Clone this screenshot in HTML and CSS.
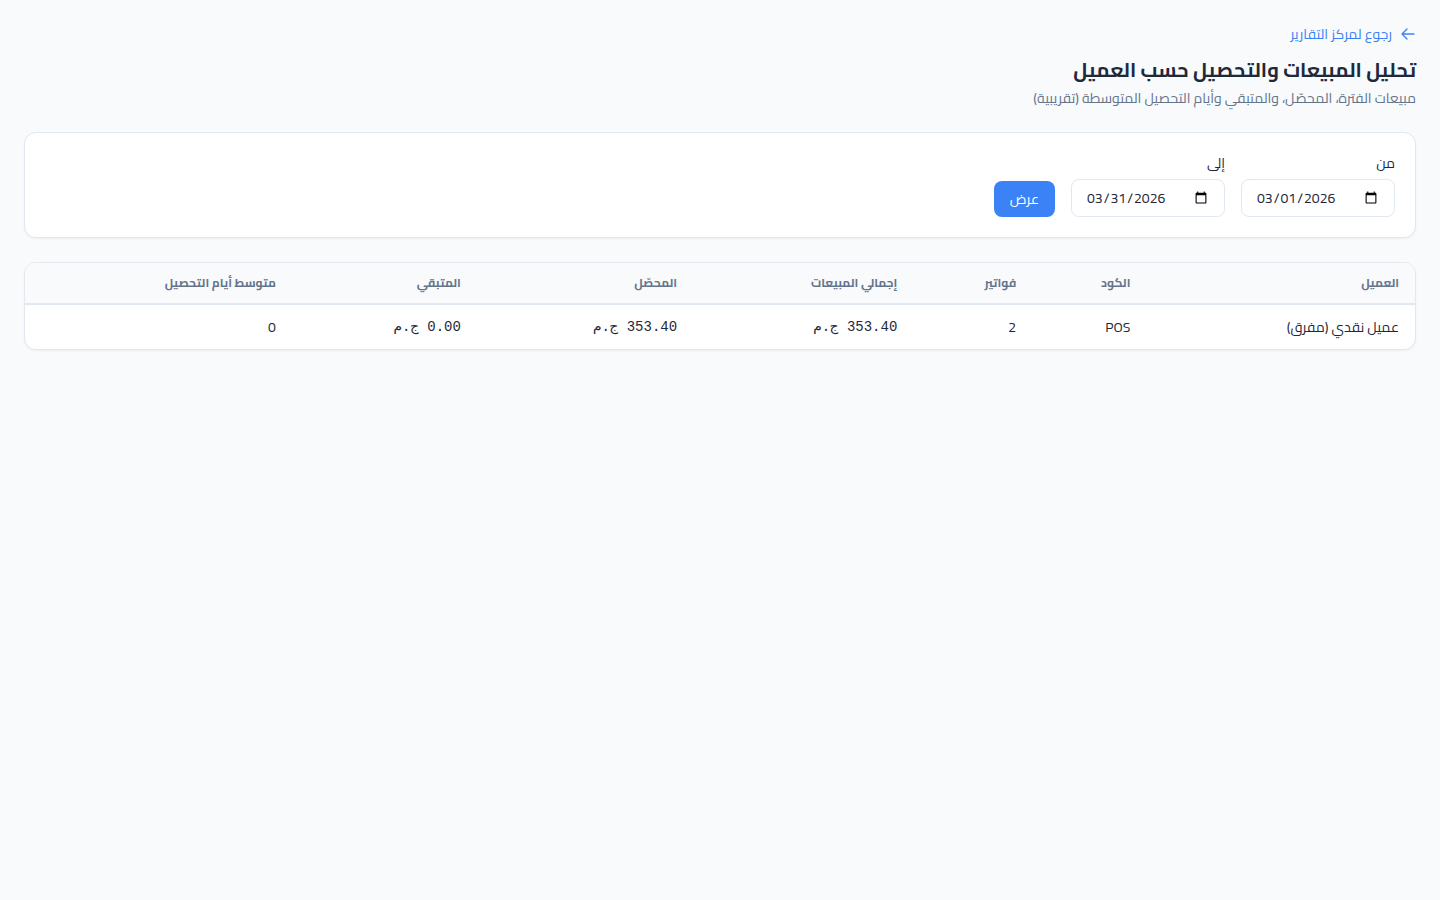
FILE: index.html
```html
<!DOCTYPE html>
<html lang="ar" dir="rtl">
<head>
    <meta charset="UTF-8">
    <meta name="viewport" content="width=device-width, initial-scale=1.0">
    <title>تحليل المبيعات والتحصيل حسب العميل</title>
    <link rel="stylesheet" href="styles.css">
</head>
<body>
    <header class="page-header">
        <a href="#" class="back-link">
            <svg class="back-icon" viewBox="0 0 24 24" aria-hidden="true">
                <path d="M10.5 19.5 3 12m0 0 7.5-7.5M3 12h18"/>
            </svg>
            رجوع لمركز التقارير
        </a>
        <h1>تحليل المبيعات والتحصيل حسب العميل</h1>
        <p class="subtitle">مبيعات الفترة، المحصّل، والمتبقي وأيام التحصيل المتوسطة (تقريبية)</p>
    </header>

    <form class="card filters">
        <div class="field">
            <label for="from">من</label>
            <input type="date" id="from" value="2026-03-01">
        </div>
        <div class="field">
            <label for="to">إلى</label>
            <input type="date" id="to" value="2026-03-31">
        </div>
        <button type="submit" class="btn">عرض</button>
    </form>

    <div class="card table-card">
        <table>
            <thead>
                <tr>
                    <th>العميل</th>
                    <th>الكود</th>
                    <th>فواتير</th>
                    <th>إجمالي المبيعات</th>
                    <th>المحصّل</th>
                    <th>المتبقي</th>
                    <th>متوسط أيام التحصيل</th>
                </tr>
            </thead>
            <tbody>
                <tr>
                    <td>عميل نقدي (مفرق)</td>
                    <td>POS</td>
                    <td>2</td>
                    <td class="money">353.40 ج.م</td>
                    <td class="money">353.40 ج.م</td>
                    <td class="money">0.00 ج.م</td>
                    <td>0</td>
                </tr>
            </tbody>
        </table>
    </div>
</body>
</html>
```
FILE: styles.css
```css
* {
    box-sizing: border-box;
}

body {
    margin: 0;
    padding: 24px;
    font-family: Cairo, "Noto Sans", sans-serif;
    font-size: 14px;
    line-height: 20px;
    background-color: #f8fafc;
    color: #1e293b;
}

.page-header {
    margin-bottom: 24px;
}

.back-link {
    display: flex;
    width: fit-content;
    align-items: center;
    gap: 8px;
    margin-bottom: 8px;
    color: #3b82f6;
    text-decoration: none;
}

.back-icon {
    width: 16px;
    height: 16px;
    fill: none;
    stroke: currentColor;
    stroke-width: 2;
    stroke-linecap: round;
    stroke-linejoin: round;
}

h1 {
    margin: 0;
    font-size: 20px;
    font-weight: 700;
    line-height: 36px;
}

.subtitle {
    margin: 0;
    color: #64748b;
}

.card {
    background-color: #fff;
    border: 1px solid #e2e8f0;
    border-radius: 12px;
    box-shadow: 0 1px 2px rgba(0, 0, 0, 0.05);
}

.filters {
    display: flex;
    align-items: flex-end;
    gap: 16px;
    padding: 20px;
    margin-bottom: 24px;
}

.field label {
    display: block;
    margin-bottom: 6px;
}

.field input {
    display: block;
    width: 154px;
    height: 38px;
    padding: 8px 14px;
    border: 1px solid #e2e8f0;
    border-radius: 8px;
    background-color: #fff;
    color: #1e293b;
    font-family: inherit;
    font-size: 14px;
}

.btn {
    height: 36px;
    padding: 0 16px;
    border: none;
    border-radius: 8px;
    background-color: #3b82f6;
    color: #fff;
    font-family: inherit;
    font-size: 14px;
    cursor: pointer;
}

.table-card {
    overflow: hidden;
}

table {
    width: 100%;
    border-spacing: 0;
}

th,
td {
    padding: 12px 16px;
    text-align: right;
}

th {
    padding: 10px 16px;
    background-color: #f8fafc;
    border-bottom: 2px solid #e2e8f0;
    color: #64748b;
    font-size: 12px;
    font-weight: 700;
}

.money {
    font-family: "Liberation Mono", monospace;
}
```
